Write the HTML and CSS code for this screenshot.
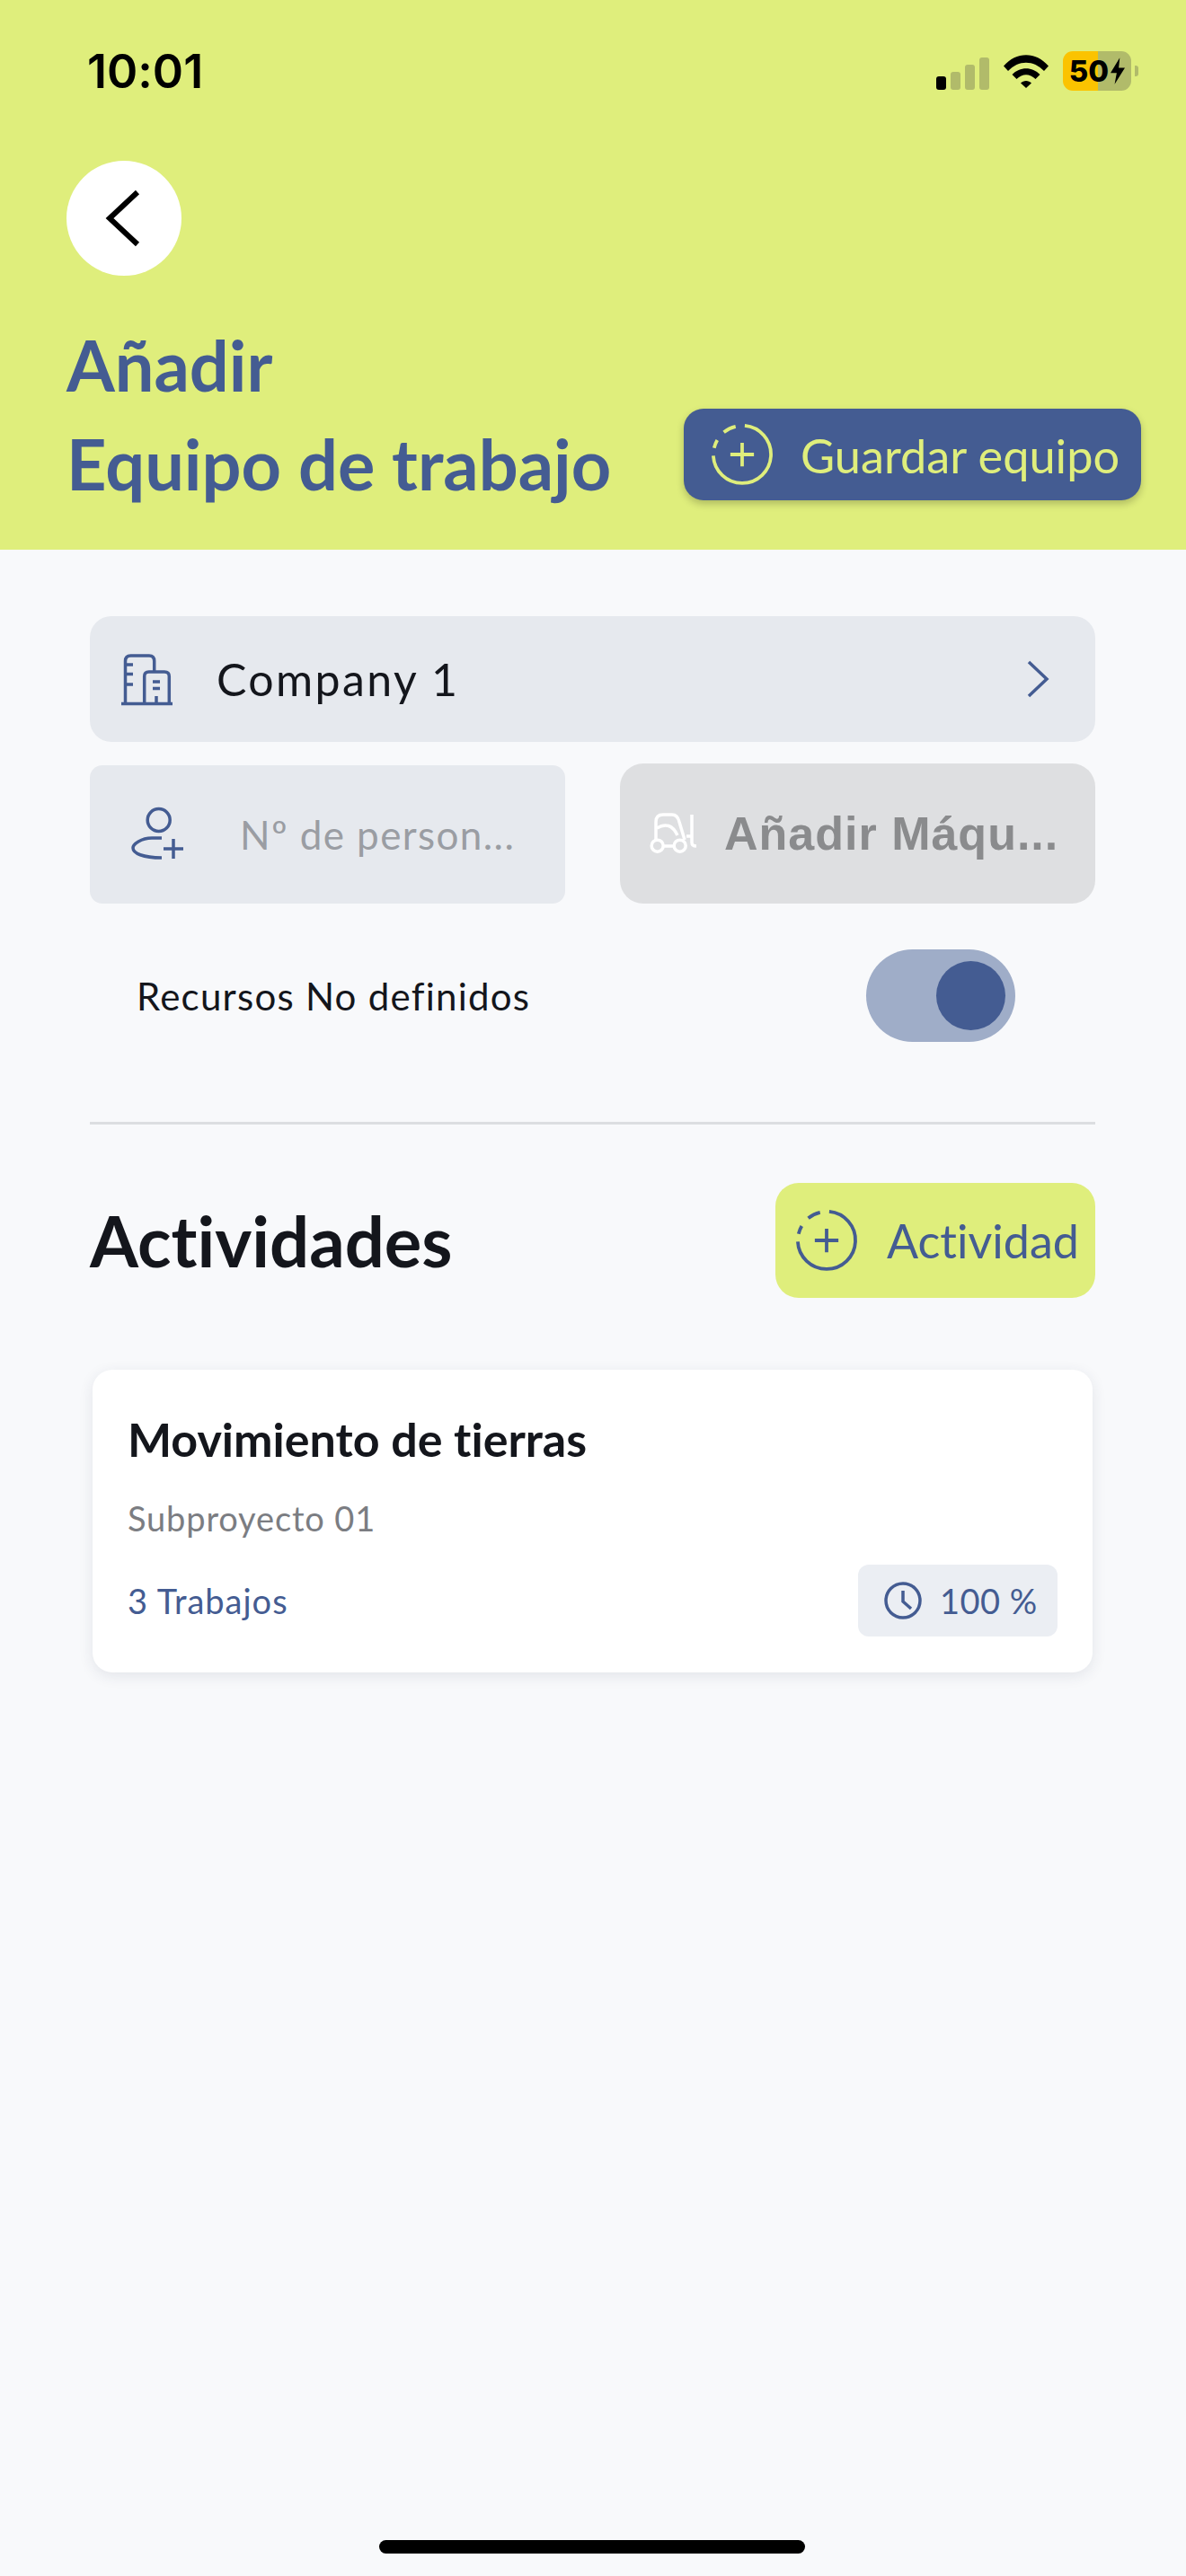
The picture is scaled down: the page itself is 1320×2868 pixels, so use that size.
FILE: index.html
```html
<!DOCTYPE html>
<html lang="es">
<head>
  <meta charset="UTF-8">
  <meta name="viewport" content="width=device-width, initial-scale=1.0">
  <title>Añadir Equipo de trabajo</title>
  <link rel="stylesheet" href="styles.css">
</head>
<body>
  <div class="screen">
    <header class="top">
      <div class="status-bar">
        <span class="clock">10:01</span>
        <div class="status-icons">
          <div class="signal">
            <span class="bar bar-1"></span>
            <span class="bar bar-2"></span>
            <span class="bar bar-3"></span>
            <span class="bar bar-4"></span>
          </div>
          <svg class="wifi" viewBox="0 0 50 38">
            <path d="M0 13.5C14-3 36-3 50 13.5L45 19C33.500 6.500 16.500 6.500 5 19Z"/>
            <path d="M9.500 23C18 14 32 14 40.500 23L35.500 28C29 21.500 21 21.500 14.500 28Z"/>
            <path d="M19 32.500C22 29 28 29 31 32.500L25 38Z"/>
          </svg>
          <div class="battery">
            <span class="battery-level">50</span>
            <svg class="bolt" viewBox="0 0 14 26"><path d="M9 0L0 15H6L4 26L14 10H8Z"/></svg>
          </div>
          <span class="battery-nub"></span>
        </div>
      </div>

      <button class="back-btn">
        <svg viewBox="0 0 40 64"><path d="M36 3L5 32L36 61"/></svg>
      </button>

      <div class="title-row">
        <h1 class="title">Añadir<br>Equipo de trabajo</h1>
        <button class="save-btn">
          <svg class="plus-icon" viewBox="0 0 24 24">
            <path d="M13 1A11 11 0 1 1 1 12.500"/>
            <path d="M1.300 9.500A11 11 0 0 1 2.500 6.500"/>
            <path d="M5 3.500A11 11 0 0 1 9.500 1.300"/>
            <path d="M12 7.500V16.500M7.500 12H16.500"/>
          </svg>
          <span>Guardar equipo</span>
        </button>
      </div>
    </header>

    <main class="content">
      <div class="company-row">
        <svg class="building-icon" viewBox="0 0 60 60">
          <path d="M2 57.500H59"/>
          <path d="M6.500 57V10Q6.500 4 12.500 4H33Q38.700 4 38.700 10V22"/>
          <path d="M27.700 57V27Q27.700 22 32.700 22H50Q55.300 22 55.300 27V57"/>
          <path d="M6.500 14H15M6.500 24.500H15M6.500 36H15"/>
          <path d="M37 33H45M37 40.500H45M41 49V57"/>
        </svg>
        <span class="company-name">Company 1</span>
        <svg class="chevron" viewBox="0 0 26 44"><path d="M3 3L23 22L3 41"/></svg>
      </div>

      <div class="field-row">
        <div class="people-field">
          <svg class="person-icon" viewBox="0 0 60 66">
            <circle cx="31.700" cy="17" r="12.500"/>
            <path d="M35 37H24C12 37 3 44 3 48C3 54 14 59 35 59"/>
            <path d="M37 49H59M48 38V60"/>
          </svg>
          <span class="people-placeholder">Nº de person...</span>
        </div>
        <button class="machine-btn">
          <svg class="forklift-icon" viewBox="0 0 58 52">
            <circle cx="9.700" cy="39.700" r="6.500"/>
            <circle cx="34.700" cy="39.700" r="6.500"/>
            <path d="M8 33V13Q8 5 16 5H26Q32 5 34 13L40 33"/>
            <path d="M9 20Q24 11 32 28"/>
            <path d="M16 40H28"/>
            <path d="M48 5V36Q48 40 53 40M42 29H48"/>
          </svg>
          <span>Añadir Máqu...</span>
        </button>
      </div>

      <div class="toggle-row">
        <span class="toggle-label">Recursos No definidos</span>
        <div class="toggle"><span class="knob"></span></div>
      </div>

      <hr class="divider">

      <div class="section-head">
        <h2 class="section-title">Actividades</h2>
        <button class="add-btn">
          <svg class="plus-icon" viewBox="0 0 24 24">
            <path d="M13 1A11 11 0 1 1 1 12.500"/>
            <path d="M1.300 9.500A11 11 0 0 1 2.500 6.500"/>
            <path d="M5 3.500A11 11 0 0 1 9.500 1.300"/>
            <path d="M12 7.500V16.500M7.500 12H16.500"/>
          </svg>
          <span>Actividad</span>
        </button>
      </div>

      <div class="card">
        <div class="card-title">Movimiento de tierras</div>
        <div class="card-sub">Subproyecto 01</div>
        <div class="card-foot">
          <span class="card-jobs">3 Trabajos</span>
          <div class="badge">
            <svg class="clock-icon" viewBox="0 0 42 42">
              <circle cx="21" cy="21" r="19"/>
              <path d="M21 10V22L30 30"/>
            </svg>
            <span>100 %</span>
          </div>
        </div>
      </div>
    </main>

    <div class="home-bar"></div>
  </div>
</body>
</html>
```

FILE: styles.css
```css
* {
  box-sizing: border-box;
}

body {
  margin: 0;
  font-family: Lato, "Open Sans", sans-serif;
  font-variant-ligatures: none;
  background-color: #f8f9fb;
}

button {
  font-family: inherit;
  font-variant-ligatures: none;
  border: none;
  padding: 0;
}

svg {
  display: block;
  flex-shrink: 0;
  fill: none;
}

.screen {
  position: relative;
  width: 1320px;
  height: 2868px;
  overflow: hidden;
}

/* Header */
.top {
  height: 612px;
  padding: 50px 50px 0 74px;
  background: #dfee7c;
}

.status-bar {
  display: flex;
  justify-content: space-between;
  align-items: center;
  height: 58px;
  padding-left: 23px;
  margin-right: 3px;
}

.clock {
  font-family: Inter, sans-serif;
  font-size: 52px;
  font-weight: 600;
  color: #000;
}

.status-icons {
  display: flex;
  align-items: center;
}

.signal {
  display: flex;
  align-items: flex-end;
  gap: 5px;
  margin-top: 6px;
}

.bar {
  width: 11px;
  border-radius: 3px;
  background: #b1bb6a;
}

.bar-1 {
  height: 15px;
  background: #000;
}

.bar-2 {
  height: 20px;
}

.bar-3 {
  height: 28px;
}

.bar-4 {
  height: 36px;
}

.wifi {
  width: 50px;
  height: 38px;
  margin-left: 16px;
  fill: #000;
}

.battery {
  display: flex;
  align-items: center;
  justify-content: center;
  gap: 2px;
  width: 76px;
  height: 44px;
  margin-left: 16px;
  border-radius: 11px;
  background: linear-gradient(to right, #fbc300 51%, #b1bb6a 51%);
}

.battery-level {
  font-family: Inter, sans-serif;
  font-size: 33px;
  font-weight: 800;
  color: #000;
}

.bolt {
  width: 16px;
  height: 30px;
  fill: #000;
}

.battery-nub {
  width: 4px;
  height: 12px;
  margin-left: 4px;
  border-radius: 0 3px 3px 0;
  background: #b1bb6a;
}

.back-btn {
  display: flex;
  align-items: center;
  justify-content: center;
  width: 128px;
  height: 128px;
  margin-top: 71px;
  border-radius: 50%;
  background: #fff;
}

.back-btn svg {
  width: 40px;
  height: 64px;
  margin-right: 2px;
  stroke: #000;
  stroke-width: 6;
}

.title-row {
  display: flex;
  justify-content: space-between;
  align-items: flex-end;
  margin-top: 45px;
}

.title {
  margin: 0;
  font-size: 77.500px;
  line-height: 110px;
  font-weight: 700;
  color: #445c92;
}

.save-btn {
  display: flex;
  align-items: center;
  width: 509px;
  height: 102px;
  margin-bottom: 15px;
  padding-left: 30px;
  border-radius: 22px;
  background: #445c92;
  box-shadow: 0 4px 8px rgba(0, 0, 0, 0.22);
  color: #dfee7c;
  font-size: 52.300px;
}

.plus-icon {
  width: 70px;
  height: 70px;
  stroke: currentColor;
  stroke-width: 1.300;
}

.save-btn span {
  margin-left: 30px;
}

/* Form */
.content {
  padding: 74px 101px 0 100px;
}

.company-row {
  display: flex;
  align-items: center;
  height: 140px;
  padding: 0 51px 0 33px;
  border-radius: 24px;
  background: #e6e9ee;
}

.building-icon {
  width: 60px;
  height: 60px;
  stroke: #445c92;
  stroke-width: 3.500;
}

.company-name {
  flex-grow: 1;
  margin-left: 48px;
  font-size: 50px;
  letter-spacing: 2.400px;
  color: #14161c;
}

.chevron {
  width: 26px;
  height: 44px;
  stroke: #445c92;
  stroke-width: 3.500;
}

.field-row {
  display: flex;
  justify-content: space-between;
  align-items: flex-end;
  margin-top: 24px;
}

.people-field {
  display: flex;
  align-items: center;
  width: 529px;
  height: 154px;
  padding-left: 45px;
  border-radius: 14px;
  background: #e6e9ee;
}

.person-icon {
  width: 60px;
  height: 66px;
  stroke: #445c92;
  stroke-width: 3.500;
}

.people-placeholder {
  margin-left: 62px;
  font-size: 44px;
  letter-spacing: 1.400px;
  color: #9a9da3;
}

.machine-btn {
  display: flex;
  align-items: center;
  width: 529px;
  height: 156px;
  padding-left: 32px;
  border-radius: 26px;
  background: #dedfe1;
  color: #8a8b8d;
  font-family: "Liberation Sans", sans-serif;
  font-size: 52px;
  font-weight: 700;
  letter-spacing: 1px;
}

.forklift-icon {
  width: 58px;
  height: 52px;
  stroke: #fff;
  stroke-width: 3.500;
}

.machine-btn span {
  margin-left: 26px;
}

.toggle-row {
  display: flex;
  justify-content: space-between;
  align-items: center;
  margin-top: 51px;
  padding: 0 89px 0 52px;
}

.toggle-label {
  font-size: 42px;
  letter-spacing: 1.250px;
  color: #14161c;
}

.toggle {
  display: flex;
  align-items: center;
  justify-content: flex-end;
  width: 166px;
  height: 103px;
  padding-right: 11px;
  border-radius: 52px;
  background: #9fadc8;
}

.knob {
  width: 77px;
  height: 77px;
  border-radius: 50%;
  background: #445c92;
}

.divider {
  height: 3px;
  margin: 89px 0 0;
  border: none;
  background: #dcdee1;
}

.section-head {
  display: flex;
  justify-content: space-between;
  align-items: center;
  margin-top: 65px;
}

.section-title {
  margin: 0;
  font-size: 77.800px;
  font-weight: 700;
  color: #14161c;
}

.add-btn {
  display: flex;
  align-items: center;
  width: 356px;
  height: 128px;
  padding-left: 22px;
  border-radius: 26px;
  background: #dfee7c;
  color: #445c92;
  font-size: 52px;
}

.add-btn span {
  margin-left: 32px;
}

/* Card */
.card {
  height: 337px;
  margin: 80px 3px 0;
  padding: 42px 39px 0 39px;
  border-radius: 22px;
  background: #fff;
  box-shadow: 0 4px 16px rgba(40, 50, 80, 0.1);
}

.card-title {
  font-size: 52px;
  line-height: 70px;
  font-weight: 700;
  color: #14161c;
}

.card-sub {
  margin-top: 30px;
  font-size: 38px;
  letter-spacing: 0.850px;
  color: #7b7d82;
}

.card-foot {
  display: flex;
  justify-content: space-between;
  align-items: center;
  margin-top: 29px;
}

.card-jobs {
  font-size: 38px;
  letter-spacing: 1px;
  color: #445c92;
}

.badge {
  display: flex;
  align-items: center;
  width: 222px;
  height: 80px;
  padding-left: 29px;
  border-radius: 12px;
  background: #ebeef3;
  font-size: 38px;
  letter-spacing: 0.500px;
  color: #445c92;
}

.clock-icon {
  width: 42px;
  height: 42px;
  margin-right: 20px;
  stroke: #445c92;
  stroke-width: 3.500;
}

.home-bar {
  position: absolute;
  left: 422px;
  bottom: 25px;
  width: 474px;
  height: 15px;
  border-radius: 8px;
  background: #000;
}
```
